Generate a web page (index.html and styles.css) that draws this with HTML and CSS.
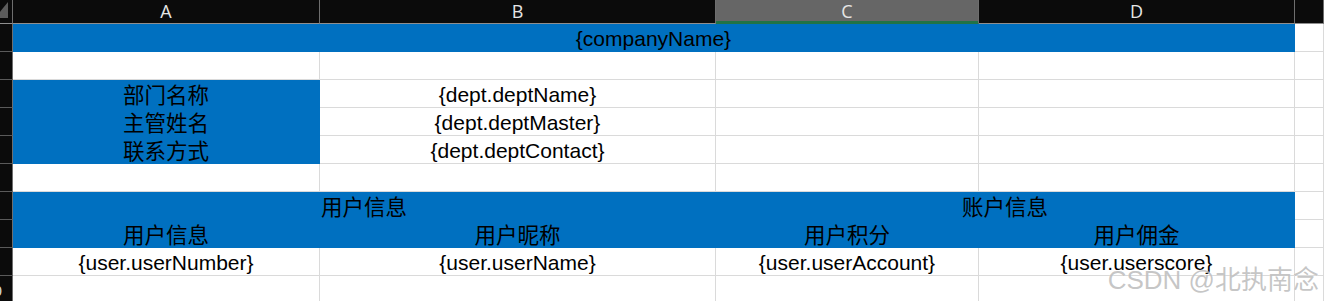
FILE: index.html
```html
<!DOCTYPE html>
<html lang="zh-CN">
<head>
<meta charset="utf-8">
<title>Sheet</title>
<link rel="stylesheet" href="styles.css">
</head>
<body>
<div class="sheet">
  <div class="corner"><div class="tri"></div></div>
  <div class="ch">A</div>
  <div class="ch">B</div>
  <div class="ch sel">C</div>
  <div class="ch">D</div>
  <div class="ch"></div>

  <div class="rh"></div>
  <div class="cell blue span4 lat">{companyName}</div>
  <div class="cell"></div>

  <div class="rh"></div>
  <div class="cell"></div><div class="cell"></div><div class="cell"></div><div class="cell"></div><div class="cell"></div>

  <div class="rh"></div>
  <div class="cell blue">部门名称</div>
  <div class="cell lat">{dept.deptName}</div>
  <div class="cell"></div><div class="cell"></div><div class="cell"></div>

  <div class="rh"></div>
  <div class="cell blue">主管姓名</div>
  <div class="cell lat">{dept.deptMaster}</div>
  <div class="cell"></div><div class="cell"></div><div class="cell"></div>

  <div class="rh"></div>
  <div class="cell blue">联系方式</div>
  <div class="cell lat">{dept.deptContact}</div>
  <div class="cell"></div><div class="cell"></div><div class="cell"></div>

  <div class="rh"></div>
  <div class="cell"></div><div class="cell"></div><div class="cell"></div><div class="cell"></div><div class="cell"></div>

  <div class="rh"></div>
  <div class="cell blue span2">用户信息</div>
  <div class="cell blue span2">账户信息</div>
  <div class="cell"></div>

  <div class="rh"></div>
  <div class="cell blue">用户信息</div>
  <div class="cell blue">用户昵称</div>
  <div class="cell blue">用户积分</div>
  <div class="cell blue">用户佣金</div>
  <div class="cell"></div>

  <div class="rh"></div>
  <div class="cell lat">{user.userNumber}</div>
  <div class="cell lat">{user.userName}</div>
  <div class="cell lat">{user.userAccount}</div>
  <div class="cell lat">{user.userscore}</div>
  <div class="cell"></div>

  <div class="rh"><span class="rnum">10</span></div>
  <div class="cell"></div><div class="cell"></div><div class="cell"></div><div class="cell"></div><div class="cell"></div>
</div>
<div class="watermark">CSDN @北执南念</div>
</body>
</html>
```

FILE: styles.css
```css
html, body {
  margin: 0;
  padding: 0;
  background: #ffffff;
  overflow: hidden;
}

body {
  width: 1324px;
  height: 301px;
  position: relative;
  font-family: "Noto Sans CJK SC", "Noto Sans", sans-serif;
}

.sheet {
  display: grid;
  grid-template-columns: 13px 307px 396px 263px 316px 1fr;
  grid-template-rows: 24px;
  grid-auto-rows: 28px;
}

.corner {
  background: #0b0b0b;
  border-right: 1px solid #6e6e6e;
  border-bottom: 1px solid #8f8f8f;
  position: relative;
  overflow: hidden;
}

.tri {
  position: absolute;
  left: -5px;
  top: 2px;
  width: 13px;
  height: 16px;
  background: #5c5c5c;
  clip-path: polygon(100% 0, 100% 100%, 0 100%);
}

.ch {
  background: #0b0b0b;
  color: #e6e6e6;
  border-right: 1px solid #6e6e6e;
  border-bottom: 1px solid #8f8f8f;
  font-family: "Open Sans", "Noto Sans", sans-serif;
  font-size: 18px;
  line-height: 23px;
  text-align: center;
}

.ch.sel {
  background: #666666;
  border-bottom-color: #217346;
  box-shadow: inset 0 -2px 0 #217346;
}

.rh {
  background: #0b0b0b;
  border-right: 1px solid #6e6e6e;
  border-bottom: 1px solid #5a5a5a;
  overflow: hidden;
  display: flex;
  justify-content: flex-end;
  align-items: center;
}

.rnum {
  color: #e6e6e6;
  font-family: "Open Sans", "Noto Sans", sans-serif;
  font-size: 15px;
  margin-right: 10px;
  white-space: nowrap;
}

.cell {
  border-right: 1px solid #dadada;
  border-bottom: 1px solid #dadada;
  display: flex;
  align-items: flex-end;
  justify-content: center;
  font-size: 21.5px;
  line-height: 27px;
  color: #000000;
  white-space: nowrap;
  overflow: visible;
}

.cell.lat {
  font-family: "Liberation Sans", "Noto Sans CJK SC", sans-serif;
  font-size: 21px;
  line-height: 25px;
}

.cell.blue {
  background: #0070c0;
  border-color: #0070c0;
}

.span4 {
  grid-column: span 4;
}

.span2 {
  grid-column: span 2;
}

.watermark {
  position: absolute;
  right: 5px;
  bottom: 6px;
  font-family: "Liberation Sans", "Noto Sans CJK SC", sans-serif;
  font-size: 26px;
  line-height: 30px;
  color: rgba(160, 160, 160, 0.6);
  text-shadow: 0 0 1px rgba(255, 255, 255, 0.8);
  white-space: nowrap;
}
```
